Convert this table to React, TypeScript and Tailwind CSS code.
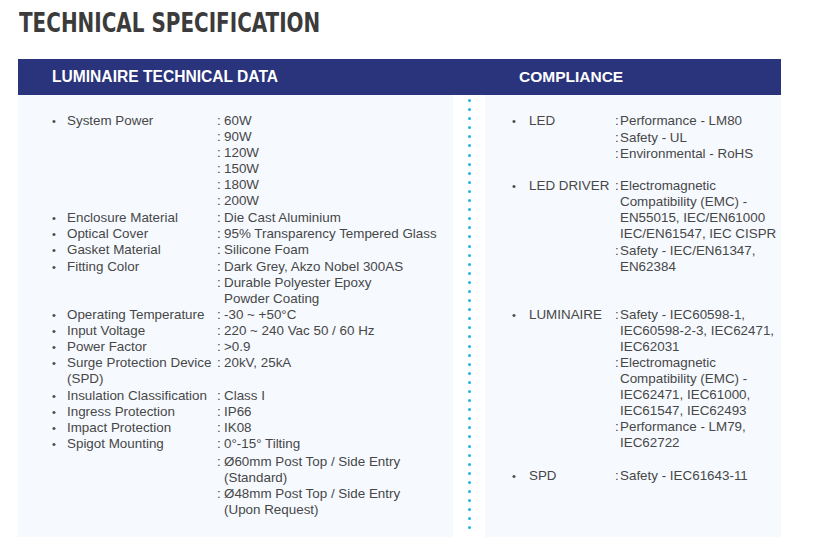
import type { ReactNode } from 'react'

type Spec = {
  label: ReactNode
  values: { lines: string[]; gap?: string }[]
  gap?: string
}

const specs: Spec[] = [
  {
    label: 'System Power',
    values: [
      { lines: ['60W'] },
      { lines: ['90W'] },
      { lines: ['120W'] },
      { lines: ['150W'] },
      { lines: ['180W'] },
      { lines: ['200W'] },
    ],
  },
  { label: 'Enclosure Material', values: [{ lines: ['Die Cast Aluminium'] }], gap: 'mt-px' },
  { label: 'Optical Cover', values: [{ lines: ['95% Transparency Tempered Glass'] }] },
  { label: 'Gasket Material', values: [{ lines: ['Silicone Foam'] }] },
  {
    label: 'Fitting Color',
    values: [{ lines: ['Dark Grey, Akzo Nobel 300AS'] }, { lines: ['Durable Polyester Epoxy', 'Powder Coating'] }],
    gap: 'mt-px',
  },
  { label: 'Operating Temperature', values: [{ lines: ['-30 ~ +50°C'] }] },
  { label: 'Input Voltage', values: [{ lines: ['220 ~ 240 Vac 50 / 60 Hz'] }] },
  { label: 'Power Factor', values: [{ lines: ['>0.9'] }] },
  {
    label: (
      <>
        Surge Protection Device
        <br />
        (SPD)
      </>
    ),
    values: [{ lines: ['20kV, 25kA'] }],
  },
  { label: 'Insulation Classification', values: [{ lines: ['Class I'] }], gap: 'mt-px' },
  { label: 'Ingress Protection', values: [{ lines: ['IP66'] }] },
  { label: 'Impact Protection', values: [{ lines: ['IK08'] }] },
  {
    label: 'Spigot Mounting',
    values: [
      { lines: ['0°-15° Tilting'] },
      { lines: ['Ø60mm Post Top / Side Entry', '(Standard)'], gap: 'mt-[2px]' },
      { lines: ['Ø48mm Post Top / Side Entry', '(Upon Request)'] },
    ],
  },
]

const compliance: Spec[] = [
  {
    label: 'LED',
    values: [
      { lines: ['Performance - LM80'] },
      { lines: ['Safety - UL'], gap: 'mt-px' },
      { lines: ['Environmental - RoHS'] },
    ],
  },
  {
    label: 'LED DRIVER',
    gap: 'mt-4',
    values: [
      {
        lines: ['Electromagnetic', 'Compatibility (EMC) -', 'EN55015, IEC/EN61000', 'IEC/EN61547, IEC CISPR'],
      },
      { lines: ['Safety - IEC/EN61347,', 'EN62384'], gap: 'mt-px' },
    ],
  },
  {
    label: 'LUMINAIRE',
    gap: 'mt-[32px]',
    values: [
      { lines: ['Safety - IEC60598-1,', 'IEC60598-2-3, IEC62471,', 'IEC62031'] },
      {
        lines: ['Electromagnetic', 'Compatibility (EMC) -', 'IEC62471, IEC61000,', 'IEC61547, IEC62493'],
      },
      { lines: ['Performance - LM79,', 'IEC62722'] },
    ],
  },
  { label: 'SPD', gap: 'mt-[17px]', values: [{ lines: ['Safety - IEC61643-11'] }] },
]

function SpecRow({ spec, labelWidth, colonWidth, bulletWidth }: { spec: Spec; labelWidth: string; colonWidth: string; bulletWidth: string }) {
  return (
    <div className={`flex ${spec.gap ?? ''}`}>
      <span className={`${bulletWidth} shrink-0 text-[11px] leading-[16px]`}>•</span>
      <div className={`${labelWidth} shrink-0`}>{spec.label}</div>
      <div className="flex flex-col">
        {spec.values.map((v, i) => (
          <div key={i} className={`flex ${v.gap ?? ''}`}>
            <span className={`${colonWidth} shrink-0`}>:</span>
            <div className="flex flex-col whitespace-nowrap">
              {v.lines.map((line) => (
                <span key={line}>{line}</span>
              ))}
            </div>
          </div>
        ))}
      </div>
    </div>
  )
}

export default function App() {
  const dots = Array.from({ length: 48 })

  return (
    <div className="h-[537px] overflow-hidden bg-white flex flex-col font-['Liberation_Sans',Arial,sans-serif]">
      {/* Title */}
      <div className="pl-[19px] pt-[10px] h-[59px]">
        <h1 className="origin-left scale-x-[0.853] whitespace-nowrap text-[26px] leading-none font-bold text-[#3b3b3b] font-['DejaVu_Sans_Condensed','DejaVu_Sans',sans-serif]">
          TECHNICAL SPECIFICATION
        </h1>
      </div>

      {/* Header bar */}
      <div className="ml-[18px] w-[763px] h-[36px] bg-[#2a347c] flex items-center text-white font-bold">
        <div className="w-[467px] pl-[34px] text-[15.6px]">LUMINAIRE TECHNICAL DATA</div>
        <div className="pl-[34px] text-[15.5px]">COMPLIANCE</div>
      </div>

      {/* Body */}
      <div className="ml-[18px] w-[763px] flex-1 grid grid-cols-[435px_32px_296px] text-[13.4px] leading-[16px] text-[#474747]">
        <div className="bg-[#f6faff] pt-[18px] pl-[34px] flex flex-col">
          {specs.map((s, i) => (
            <SpecRow key={i} spec={s} bulletWidth="w-[15px]" labelWidth="w-[150px]" colonWidth="w-[7px]" />
          ))}
        </div>

        <div className="flex flex-col items-center pt-[4px] gap-[6.1px]">
          {dots.map((_, i) => (
            <span key={i} className="block w-[3px] h-[3px] rounded-full bg-[#1ab4ea] shrink-0" />
          ))}
        </div>

        <div className="bg-[#f6faff] pt-[18px] pl-[27px] flex flex-col">
          {compliance.map((s, i) => (
            <SpecRow key={i} spec={s} bulletWidth="w-[17px]" labelWidth="w-[86px]" colonWidth="w-[5px]" />
          ))}
        </div>
      </div>
    </div>
  )
}
